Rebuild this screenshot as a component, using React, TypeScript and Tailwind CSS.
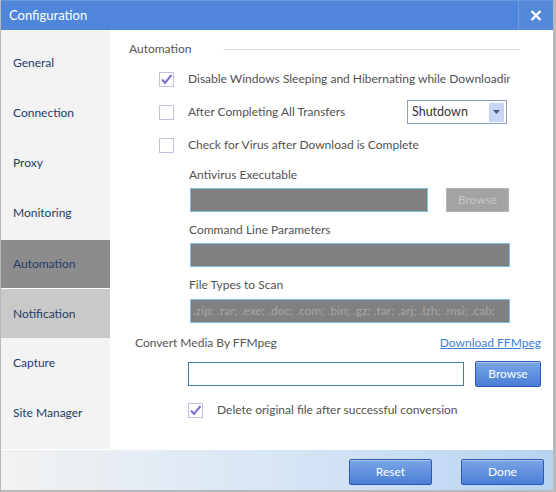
const menu = ['General', 'Connection', 'Proxy', 'Monitoring', 'Automation', 'Notification', 'Capture', 'Site Manager'];

function Check({ checked }: { checked?: boolean }) {
  return (
    <span className="w-[15px] h-[15px] border border-[#c2bedd] bg-white flex items-center justify-center shrink-0">
      {checked && (
        <svg width="13" height="13" viewBox="0 0 13 13">
          <path d="M2 6.5 L5 10 L11.5 2" fill="none" stroke="#7a6fd6" strokeWidth="2" />
        </svg>
      )}
    </span>
  );
}

function BlueButton({ label, className }: { label: string; className: string }) {
  return (
    <button
      className={`${className} rounded-[2px] border border-[#2f55c0] bg-gradient-to-b from-[#7aa6e6] to-[#4a7ed6] text-white text-[12px] shadow-[inset_0_1px_0_rgba(255,255,255,0.35)]`}
    >
      {label}
    </button>
  );
}

export default function App() {
  return (
    <div
      className="w-[556px] h-[492px] flex flex-col bg-white border-l border-r-[3px] border-b-2 border-[#b9b9b9] overflow-hidden"
      style={{ fontFamily: 'Lato, "Open Sans", sans-serif' }}
    >
      {/* title bar */}
      <div className="h-[30px] shrink-0 flex bg-[#4f86d9] border-t border-[#6b97dc]">
        <div className="flex-1 pl-[8px] flex items-center text-white text-[13px]">Configuration</div>
        <div className="w-[35px] flex items-center justify-center border-l border-[#6f9ae0] bg-[#5689da]">
          <svg width="12" height="11" viewBox="0 0 12 11">
            <path d="M1.5 1 L10.5 10 M10.5 1 L1.5 10" stroke="white" strokeWidth="2.4" />
          </svg>
        </div>
      </div>

      <div className="flex-1 flex min-h-0">
        {/* sidebar */}
        <div className="w-[109px] shrink-0 bg-[#f3f3f3] pt-[8px] flex flex-col">
          {menu.map((m) => (
            <div
              key={m}
              className={`h-[50px] flex items-center pl-[12px] text-[12px] text-[#233c68] ${
                m === 'Automation'
                  ? 'bg-[#8c8c8c] border-t-2 border-[#f3f3f3]'
                  : m === 'Notification'
                  ? 'bg-[#c9c9c9] border-t border-white'
                  : ''
              }`}
            >
              {m}
            </div>
          ))}
        </div>

        {/* content */}
        <div className="flex-1 text-[12px] text-[#525252] pt-[12px]">
          <div className="flex items-center pl-[19px] pr-[33px] h-[14px]">
            <span className="text-[#555]">Automation</span>
            <div className="flex-1 h-px bg-[#dedede] ml-[32px]" />
          </div>

          <div className="pl-[49px] mt-[11px] flex flex-col">
            <div className="flex items-center h-[24px]">
              <Check checked />
              <span className="ml-[14px] w-[322px] whitespace-nowrap overflow-hidden">
                Disable Windows Sleeping and Hibernating while Downloading
              </span>
            </div>
            <div className="flex items-center h-[24px] mt-[9px]">
              <Check />
              <span className="ml-[14px] w-[219px]">After Completing All Transfers</span>
              <div className="w-[100px] h-[24px] border border-[#8ea2bf] flex items-center pl-[4px] pr-[2px] text-[12.5px] text-[#333]">
                <span className="flex-1">Shutdown</span>
                <span className="w-[15px] h-[19px] bg-[#c8d6f6] flex items-center justify-center">
                  <svg width="7" height="4" viewBox="0 0 7 4">
                    <path d="M0 0 H7 L3.5 4 Z" fill="#4a5a80" />
                  </svg>
                </span>
              </div>
            </div>
            <div className="flex items-center h-[24px] mt-[9px]">
              <Check />
              <span className="ml-[14px]">Check for Virus after Download is Complete</span>
            </div>
          </div>

          <div className="pl-[80px] pr-[43px] mt-[10px] flex flex-col">
            <span className="h-[16px] leading-[16px] ml-[-1px]">Antivirus Executable</span>
            <div className="flex mt-[5px] h-[24px]">
              <div className="w-[238px] bg-[#808080] border border-[#7ec0e4]" />
              <div className="ml-[18px] w-[63px] bg-[#a3a3a3] border border-[#b3b3b3] flex items-center justify-center text-[#c6c6c6]">
                Browse
              </div>
            </div>
            <span className="h-[16px] leading-[16px] mt-[10px] ml-[-1px]">Command Line Parameters</span>
            <div className="mt-[5px] h-[24px] bg-[#808080] border border-[#7ec0e4]" />
            <span className="h-[16px] leading-[16px] mt-[10px] ml-[-1px]">File Types to Scan</span>
            <div className="mt-[6px] h-[24px] bg-[#808080] border border-[#7ec0e4] flex items-center pl-[2px] text-[#a7a7a7] whitespace-nowrap overflow-hidden">
              .zip; .rar; .exe; .doc; .com; .bin; .gz; .tar; .arj; .lzh; .msi; .cab;
            </div>
          </div>

          <div className="pl-[25px] pr-[12px] mt-[12px] flex items-center justify-between h-[16px]">
            <span className="text-[#555]">Convert Media By FFMpeg</span>
            <span className="text-[#3d7fd6] underline">Download FFMpeg</span>
          </div>

          <div className="pl-[78px] pr-[12px] mt-[10px] flex items-center h-[26px]">
            <div className="w-[276px] h-[24px] border border-[#3b7ea6] bg-white" />
            <BlueButton label="Browse" className="ml-[11px] w-[66px] h-[26px]" />
          </div>

          <div className="pl-[78px] mt-[15px] flex items-center h-[16px]">
            <Check checked />
            <span className="ml-[14px]">Delete original file after successful conversion</span>
          </div>
        </div>
      </div>

      {/* footer */}
      <div className="h-[41px] shrink-0 border-t border-white bg-gradient-to-r from-[#f2f2f2] via-[#d8e6f5] to-[#b7d3f1] flex items-center justify-end pr-[9px] pt-[4px] gap-[29px]">
        <BlueButton label="Reset" className="w-[83px] h-[26px]" />
        <BlueButton label="Done" className="w-[83px] h-[26px]" />
      </div>
    </div>
  );
}
